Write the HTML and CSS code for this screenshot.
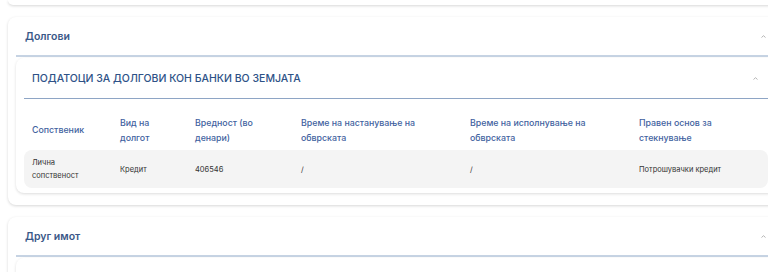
FILE: index.html
```html
<!DOCTYPE html>
<html lang="mk">
<head>
  <meta charset="UTF-8">
  <meta name="viewport" content="width=device-width, initial-scale=1.0">
  <title>Имотна состојба</title>
  <link rel="stylesheet" href="styles.css">
</head>
<body>
  <div class="page">
    <div class="card card-end"></div>

    <div class="card">
      <div class="card-header">
        <span class="card-title">Долгови</span>
        <svg class="chevron" width="5" height="3" viewBox="0 0 5 3"><polyline points="0.5,2.5 2.5,0.7 4.5,2.5" fill="none" stroke="#b4b4b4" stroke-width="1"/></svg>
      </div>
      <div class="card-body">
        <div class="sub-card">
          <div class="sub-header">
            <span class="sub-title">Податоци за долгови кон банки во земјата</span>
            <svg class="chevron" width="5" height="3" viewBox="0 0 5 3"><polyline points="0.5,2.5 2.5,0.7 4.5,2.5" fill="none" stroke="#b4b4b4" stroke-width="1"/></svg>
          </div>
          <div class="table">
            <div class="row head">
              <div class="cell">Сопственик</div>
              <div class="cell">Вид на<br>долгот</div>
              <div class="cell">Вредност (во<br>денари)</div>
              <div class="cell">Време на настанување на<br>обврската</div>
              <div class="cell">Време на исполнување на<br>обврската</div>
              <div class="cell">Правен основ за<br>стекнување</div>
            </div>
            <div class="row data">
              <div class="cell">Лична<br>сопственост</div>
              <div class="cell">Кредит</div>
              <div class="cell">406546</div>
              <div class="cell">/</div>
              <div class="cell">/</div>
              <div class="cell">Потрошувачки кредит</div>
            </div>
          </div>
        </div>
      </div>
    </div>

    <div class="card">
      <div class="card-header">
        <span class="card-title">Друг имот</span>
        <svg class="chevron" width="5" height="3" viewBox="0 0 5 3"><polyline points="0.5,2.5 2.5,0.7 4.5,2.5" fill="none" stroke="#b4b4b4" stroke-width="1"/></svg>
      </div>
      <div class="card-body">
        <div class="sub-card sub-card-open"></div>
      </div>
    </div>
  </div>
</body>
</html>
```

FILE: styles.css
```css
html,
body {
  overflow: hidden;
}

body {
  font-family: Inter, "Noto Sans", "Liberation Sans", sans-serif;
  background-color: #fff;
  color: #333;
  margin: 0;
  padding: 0 0 0 8px;
}

.page {
  width: 777px;
  display: flex;
  flex-direction: column;
  gap: 12px;
}

.card {
  background-color: #fff;
  border-radius: 8px;
  box-shadow: 0 1px 3px rgba(0, 0, 0, 0.16);
}

.card-end {
  height: 5px;
  border-radius: 0 0 8px 8px;
}

.card-header {
  display: flex;
  align-items: center;
  justify-content: space-between;
  height: 38px;
  margin-left: 8px;
  padding: 0 19px 0 9px;
  border-bottom: 2px solid #c6d3e3;
}

.card-title {
  font-size: 10.5px;
  font-weight: 600;
  color: #3a5888;
}

.card-body {
  padding: 1px 9px 12px 8px;
}

.sub-card {
  background-color: #fff;
  border-radius: 8px;
  box-shadow: 0 1px 3px rgba(0, 0, 0, 0.14);
  padding: 0 8px 5px;
}

.sub-card-open {
  height: 40px;
}

.sub-header {
  display: flex;
  align-items: center;
  justify-content: space-between;
  height: 40px;
  padding: 0 10px 0 8px;
  border-bottom: 1px solid #8ea5c5;
}

.sub-title {
  font-size: 10.5px;
  font-weight: 500;
  text-transform: uppercase;
  color: #2e5287;
}

.table {
  margin-top: 10px;
}

.row {
  display: grid;
  grid-template-columns: 88px 75px 106px 169px 169px 1fr;
  align-items: center;
}

.row.head {
  height: 41px;
  font-size: 8.8px;
  font-weight: 500;
  line-height: 15px;
  color: #3f62a0;
}

.row.data {
  height: 38px;
  background-color: #f4f4f4;
  border-radius: 8px;
  font-size: 7.5px;
  line-height: 13px;
  color: #333;
}

.cell {
  padding-left: 8px;
}

.chevron {
  display: block;
}
```
